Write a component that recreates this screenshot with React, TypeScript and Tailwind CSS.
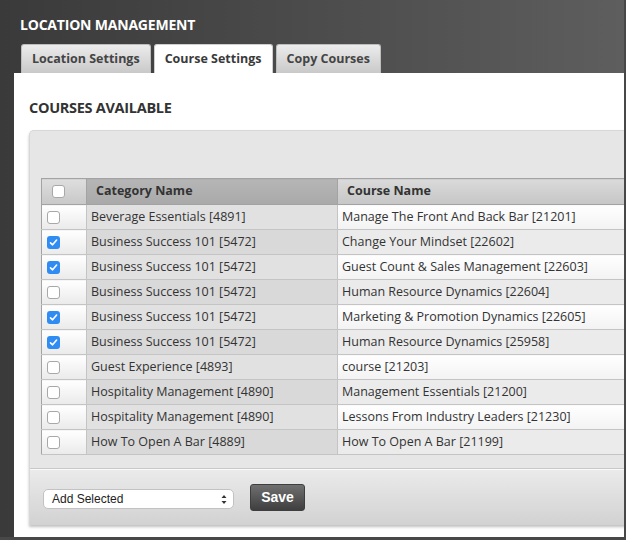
import { useState } from "react";

interface CourseRow {
  id: number;
  category: string;
  course: string;
  checked: boolean;
}

const initialRows: CourseRow[] = [
  { id: 1, category: "Beverage Essentials [4891]", course: "Manage The Front And Back Bar [21201]", checked: false },
  { id: 2, category: "Business Success 101 [5472]", course: "Change Your Mindset [22602]", checked: true },
  { id: 3, category: "Business Success 101 [5472]", course: "Guest Count & Sales Management [22603]", checked: true },
  { id: 4, category: "Business Success 101 [5472]", course: "Human Resource Dynamics [22604]", checked: false },
  { id: 5, category: "Business Success 101 [5472]", course: "Marketing & Promotion Dynamics [22605]", checked: true },
  { id: 6, category: "Business Success 101 [5472]", course: "Human Resource Dynamics [25958]", checked: true },
  { id: 7, category: "Guest Experience [4893]", course: "course [21203]", checked: false },
  { id: 8, category: "Hospitality Management [4890]", course: "Management Essentials [21200]", checked: false },
  { id: 9, category: "Hospitality Management [4890]", course: "Lessons From Industry Leaders [21230]", checked: false },
  { id: 10, category: "How To Open A Bar [4889]", course: "How To Open A Bar [21199]", checked: false },
];

const tabs = ["Location Settings", "Course Settings", "Copy Courses"];

function Check({ checked, onClick }: { checked: boolean; onClick?: () => void }) {
  if (checked) {
    return (
      <span
        onClick={onClick}
        className="flex h-[13px] w-[13px] items-center justify-center rounded-[3px] bg-[#2f8cf3]"
      >
        <svg width="9" height="9" viewBox="0 0 9 9">
          <path d="M1.5 4.8 L3.6 6.8 L7.6 2" stroke="white" strokeWidth="1.6" fill="none" strokeLinecap="round" strokeLinejoin="round" />
        </svg>
      </span>
    );
  }
  return (
    <span
      onClick={onClick}
      className="block h-[13px] w-[13px] rounded-[3px] border border-[#a8a8a8] bg-white"
    />
  );
}

export default function App() {
  const [activeTab, setActiveTab] = useState(1);
  const [rows, setRows] = useState<CourseRow[]>(initialRows);

  const toggle = (id: number) => {
    setRows((prev) => prev.map((r) => (r.id === id ? { ...r, checked: !r.checked } : r)));
  };

  return (
    <div
      className="flex h-[540px] w-[626px] flex-col overflow-hidden border-r-2 border-b-[3px] border-[#484848] bg-gradient-to-r from-[#3b3a3a] to-[#5e5e5e]"
      style={{ fontFamily: '"Open Sans", "Noto Sans", sans-serif' }}
    >
      {/* title + tabs */}
      <div className="pl-[20px] pt-[16px]">
        <h1 className="text-[14px] font-bold leading-[18px] tracking-[-0.2px] text-white">
          LOCATION MANAGEMENT
        </h1>
        <div className="mt-[10px] flex gap-[3px] pl-[1px]">
          {tabs.map((t, i) => (
            <button
              key={t}
              onClick={() => setActiveTab(i)}
              className={
                i === activeTab
                  ? "h-[29px] rounded-t-[3px] border border-b-0 border-[#cfcfcf] bg-white px-[10px] text-[12.5px] font-bold text-[#3a3a3a]"
                  : "h-[29px] rounded-t-[3px] border border-b-0 border-[#bdbdbd] bg-gradient-to-b from-[#ececec] to-[#c9c9c9] px-[10px] text-[12.5px] font-bold text-[#444]"
              }
            >
              {t}
            </button>
          ))}
        </div>
      </div>

      {/* panel */}
      <div className="ml-[14px] flex-1 overflow-hidden bg-white pl-[15px] pt-[25px]">
        <h2 className="text-[14.5px] font-bold leading-[20px] tracking-[-0.3px] text-[#333]">
          COURSES AVAILABLE
        </h2>

        <div className="mt-[12px] w-[620px] rounded-tl-[5px] border-t border-l border-[#d8d8d8] bg-[#e6e6e6] shadow-[0_2px_3px_rgba(0,0,0,0.25)]">
          <div className="h-[47px]" />
          <div className="pl-[11px]">
            <table className="w-[600px] table-fixed border-collapse border border-[#a3a3a3] text-[12.5px] text-[#333]">
              <thead>
                <tr className="h-[26px]">
                  <th className="w-[45px] border border-[#a3a3a3] bg-gradient-to-b from-[#dedede] to-[#c8c8c8] pl-[10px] text-left">
                    <Check checked={false} />
                  </th>
                  <th className="w-[251px] border border-[#a3a3a3] bg-gradient-to-b from-[#b6b6b6] to-[#a9a9a9] pl-[9px] text-left font-bold">
                    Category Name
                  </th>
                  <th className="border border-[#a3a3a3] bg-gradient-to-b from-[#dadada] to-[#c6c6c6] pl-[9px] text-left font-bold">
                    Course Name
                  </th>
                </tr>
              </thead>
              <tbody>
                {rows.map((r, i) => (
                  <tr key={r.id} className="h-[25px]">
                    <td className="border-r border-b border-[#c4c4c4] bg-gradient-to-b from-white to-[#eaeaea] pl-[5px]">
                      <Check checked={r.checked} onClick={() => toggle(r.id)} />
                    </td>
                    <td
                      className={
                        i % 2 === 0
                          ? "border-r border-b border-[#c4c4c4] bg-[#e1e1e1] pl-[4px]"
                          : "border-r border-b border-[#c4c4c4] bg-[#d9d9d9] pl-[4px]"
                      }
                    >
                      {r.category}
                    </td>
                    <td
                      className={
                        i % 2 === 0
                          ? "border-b border-[#c4c4c4] bg-gradient-to-b from-white to-[#f3f3f3] pl-[4px]"
                          : "border-b border-[#c4c4c4] bg-[#ebebeb] pl-[4px]"
                      }
                    >
                      {r.course}
                    </td>
                  </tr>
                ))}
              </tbody>
            </table>
          </div>

          {/* footer */}
          <div className="mt-[13px] flex h-[57px] items-center gap-[16px] border-t border-[#c8c8c8] bg-gradient-to-b from-[#ebebeb] to-[#d2d2d2] pl-[13px] shadow-[inset_0_1px_0_#fafafa]">
            <div
              className="relative mt-[3px] flex h-[20px] w-[191px] items-center rounded-[5px] border border-[#c2c2c2] bg-white pl-[8px] text-[12px] text-[#222]"
              style={{ fontFamily: '"Liberation Sans", Arial, sans-serif' }}
            >
              Add Selected
              <svg className="absolute right-[6px] top-[4px]" width="6" height="11" viewBox="0 0 6 11">
                <path d="M0.5 4 L3 1 L5.5 4 Z M0.5 7 L3 10 L5.5 7 Z" fill="#333" />
              </svg>
            </div>
            <button
              className="h-[27px] w-[55px] rounded-[3px] border border-[#3e3e3e] bg-gradient-to-b from-[#707070] to-[#3f3f3f] text-[14px] font-bold text-white"
              style={{ fontFamily: '"Liberation Sans", Arial, sans-serif' }}
            >
              Save
            </button>
          </div>
        </div>
      </div>
    </div>
  );
}
